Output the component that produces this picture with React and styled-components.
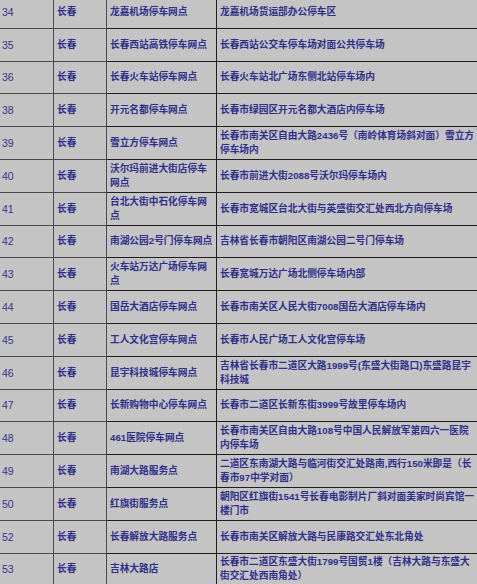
import React from 'react';
import styled, { createGlobalStyle } from 'styled-components';

const GlobalStyle = createGlobalStyle`
  html, body {
    margin: 0;
    padding: 0;
    background: #c4c4c4;
    overflow: hidden;
  }
`;

const Sheet = styled.table`
  border-collapse: collapse;
  table-layout: fixed;
  width: 481px;
  margin: -5px 0 0 -2px;
  background: #c4c4c4;
  font-family: "Liberation Sans", "Noto Sans CJK SC", sans-serif;
  font-weight: bold;
  font-size: 9.7px;
  line-height: 14px;
  color: #2f2f8a;
`;

const Col = styled.col`
  width: ${(p) => p.$w}px;
`;

const Row = styled.tr`
  height: 32.8px;
`;

const Cell = styled.td`
  border: 1px solid ${(p) => (p.$soft ? '#4a4a4a' : '#1e1e1e')};
  padding: 0 0 0 3px;
  vertical-align: middle;
  white-space: nowrap;
  overflow: hidden;
`;

const Num = styled(Cell)`
  font-size: 10.5px;
  font-weight: normal;
  color: #34348a;
`;

const rows = [
  ['34', '龙嘉机场停车网点', ['龙嘉机场货运部办公停车区']],
  ['35', '长春西站高铁停车网点', ['长春西站公交车停车场对面公共停车场']],
  ['36', '长春火车站停车网点', ['长春火车站北广场东侧北站停车场内']],
  ['38', '开元名都停车网点', ['长春市绿园区开元名都大酒店内停车场']],
  ['39', '雪立方停车网点', ['长春市南关区自由大路2436号（南岭体育场斜对面）雪立方', '停车场内']],
  ['40', ['沃尔玛前进大街店停车', '网点'], ['长春市前进大街2088号沃尔玛停车场内']],
  ['41', ['台北大街中石化停车网', '点'], ['长春市宽城区台北大街与英盛街交汇处西北方向停车场']],
  ['42', '南湖公园2号门停车网点', ['吉林省长春市朝阳区南湖公园二号门停车场']],
  ['43', ['火车站万达广场停车网', '点'], ['长春宽城万达广场北侧停车场内部']],
  ['44', '国岳大酒店停车网点', ['长春市南关区人民大街7008国岳大酒店停车场内']],
  ['45', '工人文化宫停车网点', ['长春市人民广场工人文化宫停车场']],
  ['46', '昆宇科技城停车网点', ['吉林省长春市二道区大路1999号(东盛大街路口)东盛路昆宇', '科技城']],
  ['47', '长新购物中心停车网点', ['长春市二道区长新东街3999号故里停车场内']],
  ['48', '461医院停车网点', ['长春市南关区自由大路108号中国人民解放军第四六一医院', '内停车场']],
  ['49', '南湖大路服务点', ['二道区东南湖大路与临河街交汇处路南,西行150米即是（长', '春市97中学对面）']],
  ['50', '红旗街服务点', ['朝阳区红旗街1541号长春电影制片厂斜对面美家时尚宾馆一', '楼门市']],
  ['52', '长春解放大路服务点', ['长春市南关区解放大路与民康路交汇处东北角处']],
  ['53', '吉林大路店', ['长春市二道区东盛大街1799号国贸1楼（吉林大路与东盛大', '街交汇处西南角处）']],
];

const Lines = ({ text }) => {
  const list = Array.isArray(text) ? text : [text];
  return list.map((line, i) => (
    <React.Fragment key={i}>
      {i > 0 && <br />}
      {line}
    </React.Fragment>
  ));
};

export default function App() {
  return (
    <>
      <GlobalStyle />
      <Sheet>
        <colgroup>
          <Col $w={55} />
          <Col $w={53} />
          <Col $w={110} />
          <Col $w={263} />
        </colgroup>
        <tbody>
          {rows.map(([no, name, addr]) => (
            <Row key={no}>
              <Num $soft>{no}</Num>
              <Cell $soft>长春</Cell>
              <Cell>
                <Lines text={name} />
              </Cell>
              <Cell>
                <Lines text={addr} />
              </Cell>
            </Row>
          ))}
        </tbody>
      </Sheet>
    </>
  );
}
